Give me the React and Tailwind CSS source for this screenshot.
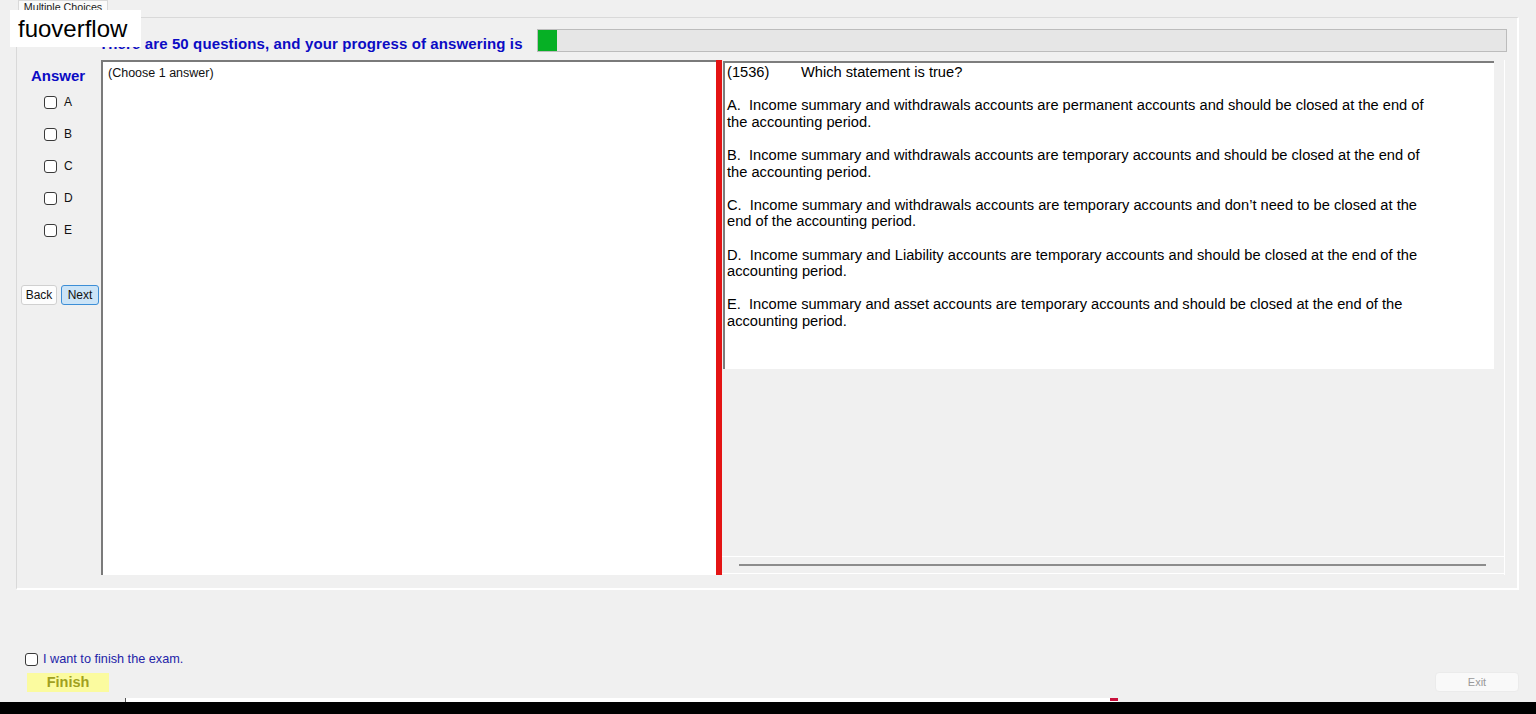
export default function App() {
  const letters = ["A", "B", "C", "D", "E"];
  const paras = [
    "A.  Income summary and withdrawals accounts are permanent accounts and should be closed at the end of the accounting period.",
    "B.  Income summary and withdrawals accounts are temporary accounts and should be closed at the end of the accounting period.",
    "C.  Income summary and withdrawals accounts are temporary accounts and don\u2019t need to be closed at the end of the accounting period.",
    "D.  Income summary and Liability accounts are temporary accounts and should be closed at the end of the accounting period.",
    "E.  Income summary and asset accounts are temporary accounts and should be closed at the end of the accounting period.",
  ];
  const Box = () => (
    <span className="inline-block w-[13px] h-[13px] border border-[#3a3a3a] rounded-[3px] bg-white shrink-0" />
  );
  return (
    <div className="relative w-[1536px] h-[714px] overflow-hidden bg-[#f0f0f0] font-['Liberation_Sans',Arial,sans-serif] text-black flex flex-col">
      {/* tab header */}
      <div className="h-[17px] pl-[18px] flex shrink-0">
        <div className="w-[90px] h-[17px] bg-[#fafafa] border-x border-t border-[#d9d9d9] text-[10.7px] leading-[12px] text-center text-[#1a1a1a] whitespace-nowrap overflow-hidden">
          Multiple Choices
        </div>
      </div>

      {/* tab panel */}
      <div className="ml-[16px] w-[1503px] h-[573px] shrink-0 border-l border-t border-[#d9d9d9] border-r-2 border-b-2 border-r-white border-b-white flex flex-col">
        {/* heading row */}
        <div className="mt-[11px] h-[24px] flex items-start">
          <div className="w-[520px] pl-[82px] pt-[6px] text-[15px] font-bold leading-[18px] tracking-[0.12px] text-[#0b0bc4] whitespace-nowrap">
            There are 50 questions, and your progress of answering is
          </div>
          <div className="flex-1 mr-[10px] h-[23px] bg-[#e6e6e6] border border-[#bcbcbc] flex">
            <div className="w-[19px] h-full bg-[#06b025]" />
          </div>
        </div>

        {/* main row */}
        <div className="mt-[7px] h-[515px] flex">
          {/* left column */}
          <div className="w-[84px] flex flex-col">
            <div className="pt-[7px] pl-[14px] text-[15px] font-bold leading-[18px] text-[#0b0bc4]">Answer</div>
            <div className="mt-[1px] flex flex-col">
              {letters.map((l) => (
                <div key={l} className="h-[32px] flex items-center pl-[27px] gap-[7px] text-[12px] text-[#111]">
                  <Box />
                  <span>{l}</span>
                </div>
              ))}
            </div>
            <div className="mt-[39px] pl-[4px] flex gap-[4px]">
              <div className="w-[36px] h-[20px] bg-[#fdfdfd] border border-[#d0d0d0] rounded-[3px] text-[12px] leading-[18px] text-center text-[#111]">
                Back
              </div>
              <div className="w-[38px] h-[20px] bg-[#cce4f7] border border-[#3d8ed6] rounded-[3px] text-[12px] leading-[18px] text-center text-[#111]">
                Next
              </div>
            </div>
          </div>

          {/* middle panel */}
          <div className="w-[615px] h-full bg-white border-l-2 border-t-2 border-[#7a7a7a] pl-[5px] pt-[4px] text-[12.5px] leading-[14px] text-[#111]">
            (Choose 1 answer)
          </div>

          {/* splitter */}
          <div className="w-[6px] h-full bg-[#e41414]" />

          {/* right panel */}
          <div className="w-[783px] h-full border-r border-white flex flex-col">
            <div className="ml-[1px] mt-[1px] w-[771px] h-[308px] bg-white border-l-2 border-t-2 border-[#7d7d7d] pl-[2px] pt-[1px] text-[14.67px] leading-[16.6px]">
              <div className="w-[712px]">
                <div className="flex">
                  <span className="inline-block w-[74px]">(1536)</span>
                  <span>Which statement is true?</span>
                </div>
                {paras.map((p, i) => (
                  <div key={i} className="mt-[16.6px] whitespace-pre-wrap">
                    {p}
                  </div>
                ))}
              </div>
            </div>
            <div className="mt-auto mb-[1px] h-[18px] border-t border-b border-white">
              <div className="mt-[7px] ml-[17px] w-[747px] h-[2px] bg-[#8c8c8c]" />
            </div>
          </div>
        </div>
      </div>

      {/* bottom area */}
      <div className="h-[108px] shrink-0 flex items-end justify-between pb-[6px] pl-[25px] pr-[17px]">
        <div className="flex flex-col">
          <div className="h-[14px] flex items-center gap-[5px]">
            <Box />
            <span className="text-[12.7px] leading-[14px] text-[#2424a8]">I want to finish the exam.</span>
          </div>
          <div className="ml-[2px] mt-[7px] w-[82px] h-[19px] bg-[#fbfb9f] text-center font-bold text-[14.5px] leading-[19px] text-[#a0a020]">
            Finish
          </div>
        </div>
        <div className="w-[84px] h-[20px] bg-[#f9f9f9] border border-[#ebebeb] rounded-[4px] text-[11px] text-[#9a9a9a] text-center leading-[18px]">
          Exit
        </div>
      </div>

      {/* thin strip */}
      <div className="h-[4px] shrink-0 flex">
        <div className="ml-[125px] w-[993px] h-full bg-white flex justify-between">
          <div className="w-[1px] h-full bg-[#555]" />
          <div className="w-[8px] h-[3px] bg-[#c8103c]" />
        </div>
      </div>

      {/* black bar */}
      <div className="h-[12px] shrink-0 bg-black" />

      {/* watermark */}
      <div className="absolute left-[10px] top-[10px] w-[131px] h-[37px] bg-white pl-[8px] text-[24px] leading-[37px] text-black">
        fuoverflow
      </div>
    </div>
  );
}
